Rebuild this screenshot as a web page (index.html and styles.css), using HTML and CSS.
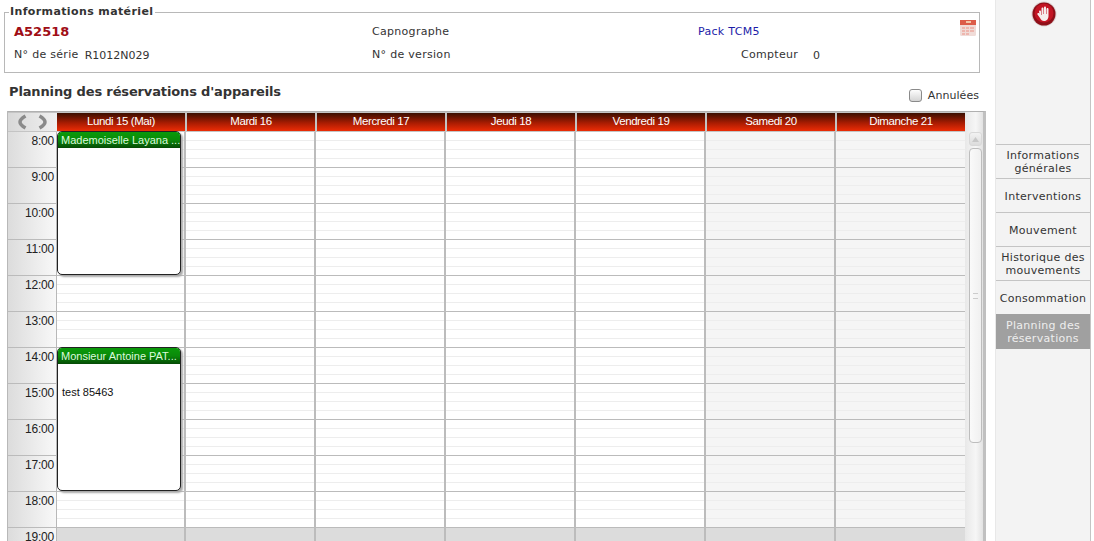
FILE: index.html
```html
<!DOCTYPE html>
<html lang="fr">
<head>
<meta charset="utf-8">
<title>Planning des réservations</title>
<link rel="stylesheet" href="styles.css">
</head>
<body>
<div class="page">
  <main class="main">
    <fieldset class="info">
      <legend>Informations matériel</legend>
      <div class="info-grid">
        <div class="ref">A52518</div>
        <div>Capnographe</div>
        <div class="pack">Pack TCM5</div>
        <svg class="cal" width="18" height="18" viewBox="0 0 18 18">
          <rect x="1" y="1" width="16" height="16" rx="1.5" fill="#f0dcd8"/>
          <rect x="1" y="1" width="16" height="5" fill="#dc5d4a"/>
          <rect x="7" y="2" width="5" height="2" fill="#f3c7a8"/>
          <path d="M3 8h3v2H3zM7 8h3v2H7zM11 8h4v2h-4zM3 11h3v2H3zM7 11h3v2H7zM11 11h4v2h-4zM3 14h3v2H3zM7 14h3v2H7z" fill="#eeb6ae"/>
        </svg>
        <div class="serie"><span>N° de série</span><span class="serie-val">R1012N029</span></div>
        <div>N° de version</div>
        <div class="compteur"><span>Compteur</span><span class="compteur-val">0</span></div>
      </div>
    </fieldset>

    <div class="title-row">
      <h1>Planning des réservations d'appareils</h1>
      <label class="cancelled"><span class="check"></span>Annulées</label>
    </div>

    <div class="planner">
      <div class="calendar">
        <div class="head">
          <div class="nav">
            <svg width="12" height="16" viewBox="0 0 12 16"><path d="M9.500 2C6 4 4 6 4 8s2 4 5.500 6" fill="none" stroke="#8a8a8a" stroke-width="3.500"/></svg>
            <svg width="12" height="16" viewBox="0 0 12 16"><path d="M2.500 2C6 4 8 6 8 8s-2 4-5.500 6" fill="none" stroke="#8a8a8a" stroke-width="3.500"/></svg>
          </div>
          <div class="dayname">Lundi 15 (Mai)</div>
          <div class="dayname">Mardi 16</div>
          <div class="dayname">Mercredi 17</div>
          <div class="dayname">Jeudi 18</div>
          <div class="dayname">Vendredi 19</div>
          <div class="dayname">Samedi 20</div>
          <div class="dayname">Dimanche 21</div>
        </div>
        <div class="body">
          <div class="hours">
            <div class="hour">8:00</div><div class="hour">9:00</div><div class="hour">10:00</div>
            <div class="hour">11:00</div><div class="hour">12:00</div><div class="hour">13:00</div>
            <div class="hour">14:00</div><div class="hour">15:00</div><div class="hour">16:00</div>
            <div class="hour">17:00</div><div class="hour">18:00</div><div class="hour">19:00</div>
          </div>
          <div class="day first">
            <div class="off"></div>
            <article class="event event-a">
              <div class="event-head">Mademoiselle Layana ...</div>
            </article>
            <article class="event event-b">
              <div class="event-head">Monsieur Antoine PAT...</div>
              <div class="event-text">test 85463</div>
            </article>
          </div>
          <div class="day"><div class="off"></div></div>
          <div class="day"><div class="off"></div></div>
          <div class="day"><div class="off"></div></div>
          <div class="day"><div class="off"></div></div>
          <div class="day weekend"><div class="off"></div></div>
          <div class="day weekend"><div class="off"></div></div>
        </div>
      </div>
      <div class="scrollbar">
        <div class="scroll-up">
          <svg width="9" height="7" viewBox="0 0 9 7"><path d="M1 6 4.500 1 8 6z" fill="#c8c8c8"/></svg>
        </div>
        <div class="thumb"><span class="grip"></span></div>
      </div>
    </div>
  </main>

  <aside class="side">
    <div class="stop">
      <svg width="26" height="26" viewBox="0 0 26 26">
        <circle cx="13" cy="13" r="12.500" fill="#d9d0d0"/>
        <circle cx="13" cy="13" r="11.500" fill="#8e0f18"/>
        <circle cx="13" cy="12" r="9.500" fill="#c21524"/>
        <path d="M8 10.500c0-1.500 2-1.500 2 0V14h.5V7.500c0-1.500 2-1.500 2 0V13h.5V6.500c0-1.500 2-1.500 2 0V13h.5V8c0-1.500 2-1.500 2 0v7c0 3-2 5-4.500 5-2 0-3-1-4-3l-2.500-3.500c-.7-1.300 1-2 1.800-1l.2.300z" fill="#f6eeee"/>
      </svg>
    </div>
    <nav class="menu">
      <div class="item">Informations générales</div>
      <div class="item one">Interventions</div>
      <div class="item one">Mouvement</div>
      <div class="item">Historique des mouvements</div>
      <div class="item one">Consommation</div>
      <div class="item active">Planning des réservations</div>
    </nav>
  </aside>
</div>
</body>
</html>
```

FILE: styles.css
```css
* { box-sizing: border-box; }
html, body { margin: 0; height: 541px; overflow: hidden; background: #fff; }
body { font: 11px "DejaVu Sans", Verdana, sans-serif; letter-spacing: .3px; color: #333; }

.page { display: flex; height: 541px; width: 1091px; }
.main { width: 995px; flex: none; padding: 5px 0 0 4px; }

/* Equipment panel */
.info {
  margin: 0;
  padding: 0 0 0 9px;
  width: 976px;
  height: 68px;
  border: 1px solid #b8b8b8;
}
.info legend {
  padding: 0 2px 0 1px;
  margin-left: -5px;
  font-weight: bold;
  font-size: 11px;
  line-height: 14px;
  letter-spacing: .38px;
  color: #333;
}
.info-grid {
  position: relative;
  display: grid;
  grid-template-columns: 358px 326px 280px;
  grid-template-rows: 24px 23px;
  align-items: center;
}
.ref { font-weight: bold; font-size: 13px; letter-spacing: 0; color: #a00d16; }
.pack { color: #1c1ca8; }
.cal { position: absolute; right: 2px; top: 0; }
.serie { display: flex; }
.serie-val { margin-left: 6px; position: relative; top: 1px; letter-spacing: 0; }
.compteur { display: flex; padding-left: 43px; }
.compteur-val { margin-left: 15px; position: relative; top: 1px; letter-spacing: 0; }

/* Title */
.title-row {
  display: flex;
  justify-content: space-between;
  align-items: center;
  width: 975px;
  height: 38px;
  padding-left: 5px;
}
.title-row h1 { margin: 0; font-size: 13px; font-weight: bold; letter-spacing: -.14px; color: #333; position: relative; top: -1px; }
.cancelled { display: flex; align-items: center; gap: 6px; position: relative; top: 3px; letter-spacing: .05px; }
.check {
  width: 13px;
  height: 13px;
  border: 1px solid #8a8a8a;
  border-radius: 3px;
  background: linear-gradient(#fdfdfd, #d4d4d4);
}

/* Planner */
.planner { display: flex; margin-left: 3px; height: 430px; }
.calendar { width: 958px; flex: none; border-left: 1px solid #b8b8b8; }
.head {
  display: flex;
  height: 21px;
  background: #c4c4c4;
  padding-top: 1px;
  border-top: 1px solid #b0b0b0;
}
.nav {
  width: 49px;
  height: 18px;
  flex: none;
  display: flex;
  justify-content: center;
  gap: 9px;
  align-items: center;
  background: linear-gradient(90deg, #d8d8d8, #f0f0f0);
}
.dayname {
  width: 128px;
  height: 18px;
  margin-right: 2px;
  flex: none;
  color: #fff;
  text-align: center;
  font: 11.500px/17px "Liberation Sans", Arial, sans-serif;
  letter-spacing: -.4px;
  background: linear-gradient(#3a0e00, #a81c02 55%, #ec2c06);
}
.dayname:last-child { margin-right: 0; }

.body { display: flex; }
.hours { width: 48px; flex: none; }
.hour {
  height: 36px;
  padding: 1px 2px 0 0;
  text-align: right;
  font: 12px/16px "Liberation Sans", Arial, sans-serif;
  letter-spacing: -.2px;
  color: #222;
  background: linear-gradient(90deg, #dcdcdc, #f8f8f8);
  border-bottom: 1px solid #bbb;
}
.day {
  position: relative;
  width: 130px;
  height: 409px;
  flex: none;
  border-right: 2px solid #bcbcbc;
  background-color: #fff;
  background-image:
    linear-gradient(#0000 35px, #bbb 35px),
    linear-gradient(#0000 8px, #ededed 8px 9px, #0000 9px 17px, #ededed 17px 18px, #0000 18px 26px, #ededed 26px 27px, #0000 27px);
  background-size: 100% 36px, 100% 36px;
}
.day.first { border-left: 1px solid #b8b8b8; }
.day:last-child { width: 129px; border-right: 0; }
.weekend { background-color: #f5f5f5; }
.off { position: absolute; left: 0; right: 0; top: 396px; height: 13px; background: #dcdcdc; }

.event {
  position: absolute;
  left: 0;
  width: 124px;
  background: #fff;
  border: 1px solid #222;
  border-radius: 5px;
  overflow: hidden;
  box-shadow: 2px 2px 2px #aaa;
  font: 11px/15px "Liberation Sans", Arial, sans-serif;
  letter-spacing: 0;
  color: #111;
}
.event-a { top: -1px; height: 144px; }
.event-b { top: 215px; height: 144px; }
.event-head {
  height: 16px;
  padding: 1px 0 0 3px;
  color: #dcfadc;
  white-space: nowrap;
  background: linear-gradient(#0a9a0a, #0a8a0a 50%, #054a05);
}
.event-text { padding: 21px 0 0 4px; }

/* Scrollbar */
.scrollbar {
  width: 21px;
  flex: none;
  position: relative;
  padding: 20px 1px 0 4px;
  background: linear-gradient(90deg, #e8e8e8, #f6f6f6 60%, #e2e2e2);
  border-right: 3px solid #c0c0c0;
  border-top: 1px solid #b0b0b0;
}
.scroll-up {
  height: 14px;
  display: flex;
  align-items: center;
  justify-content: center;
  background: linear-gradient(#f2f2f2, #dcdcdc);
  border-radius: 3px;
  border: 1px solid #d8d8d8;
}
.thumb {
  height: 295px;
  margin-top: 2px;
  background: linear-gradient(90deg, #fafafa, #f0f0f0);
  border: 1px solid #bdbdbd;
  border-radius: 4px;
  display: flex;
  align-items: center;
  justify-content: center;
}
.grip { width: 5px; height: 6px; border-top: 1px solid #ccc; border-bottom: 1px solid #ccc; }

/* Side menu */
.side {
  width: 96px;
  flex: none;
  background: #f3f3f3;
  border-left: 1px solid #e8e8e8;
  border-right: 1px solid #c4c4c4;
}
.stop { height: 144px; display: flex; justify-content: center; padding: 1px 0 0 2px; }
.menu { display: flex; flex-direction: column; }
.item {
  height: 34px;
  display: flex;
  align-items: center;
  justify-content: center;
  text-align: center;
  font-size: 11px;
  line-height: 13px;
  color: #333;
  border-top: 1px solid #c4c4c4;
}
.item.one { padding-top: 2px; }
.item.active { background: #a0a0a0; color: #eee; height: 35px; border-top: 0; }
```
